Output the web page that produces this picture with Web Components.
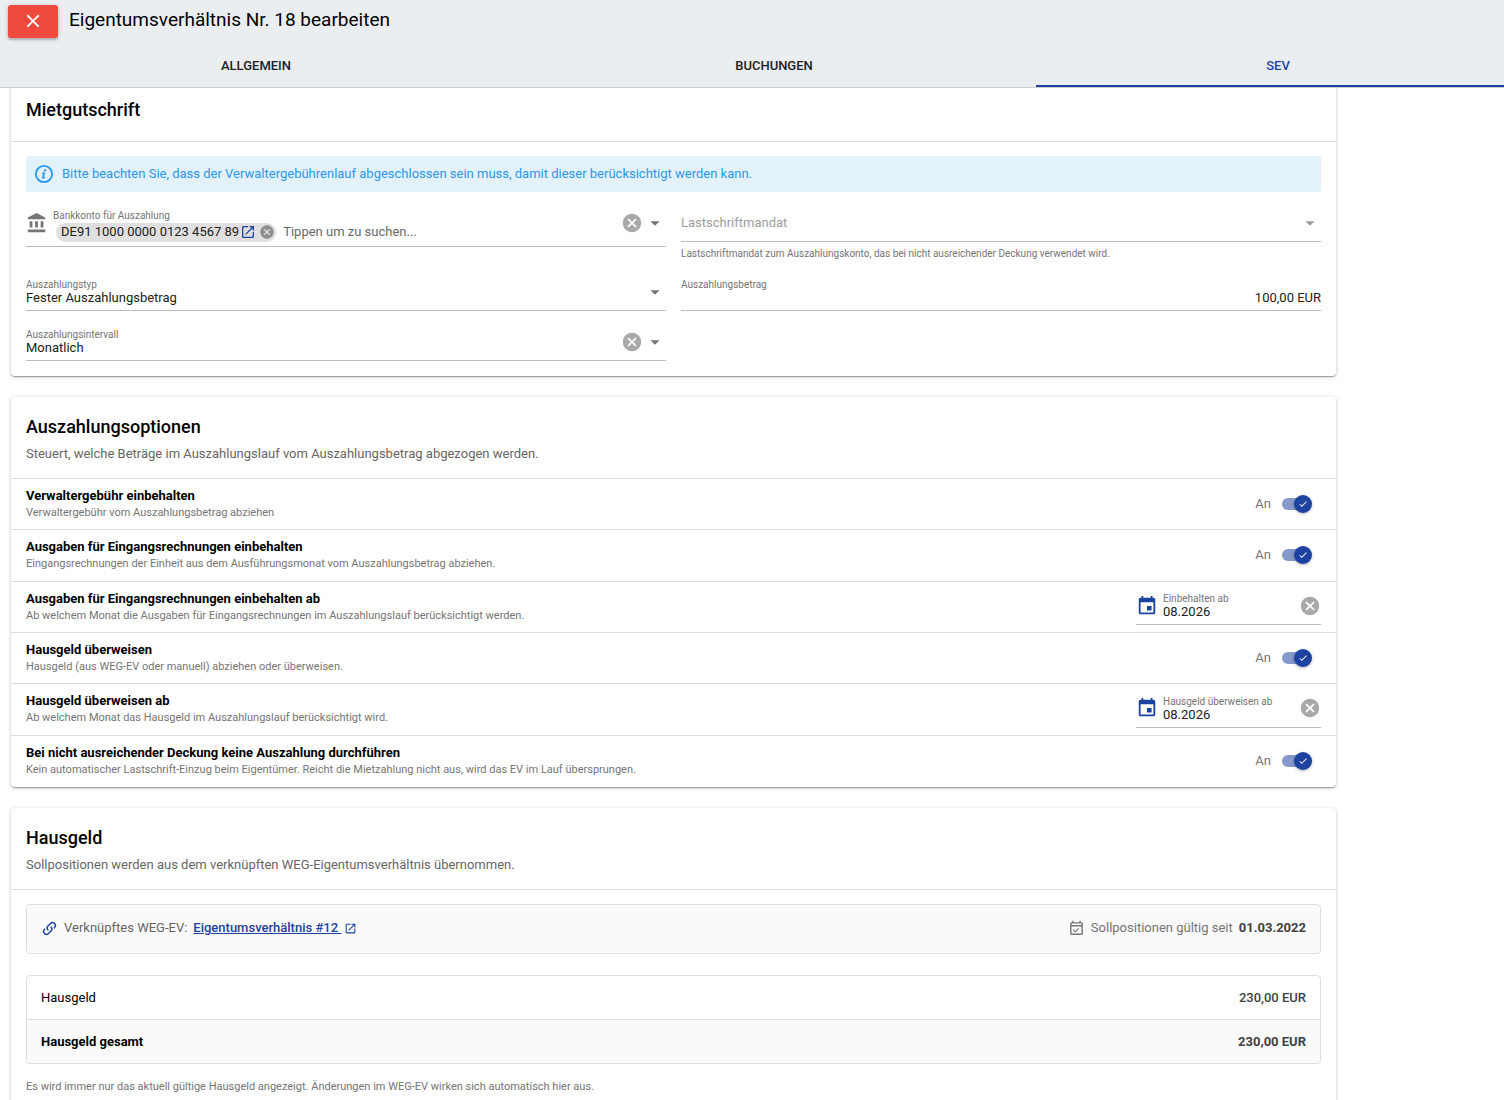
<!DOCTYPE html>
<html lang="de">
<head>
<meta charset="utf-8">
<meta name="viewport" content="width=device-width, initial-scale=1">
<title>Eigentumsverhältnis Nr. 18 bearbeiten</title>
<style>
    :root {
        --primary: #1e429f;
        --negative: #f04a3e;
        --info: #2b97ed;
        --line: #dedede;
        --muted: #757575;
    }

    body {
        margin: 0;
        font-family: Roboto, "Liberation Sans", sans-serif;
        font-size: 13px;
        line-height: 20px;
        color: #000;
        background: #fff;
    }
</style>
</head>
<body>
<app-page></app-page>

<script>
// Shared helper: every element clones its own template into an open root
function attach(host, html) {
    const template = document.createElement('template');
    template.innerHTML = html;
    host.attachShadow({ mode: 'open' });
    host.shadowRoot.appendChild(template.content.cloneNode(true));
    return host.shadowRoot;
}

const ICONS = {
    close: '<path d="M19 6.41L17.59 5 12 10.59 6.41 5 5 6.41 10.59 12 5 17.59 6.41 19 12 13.41 17.59 19 19 17.59 13.41 12z"/>',
    info: '<circle cx="12" cy="12" r="8.9" fill="none" stroke="currentColor" stroke-width="2"/><circle cx="13.1" cy="8" r="1.3"/><path d="M9.9 10.4h3.6l-1.4 5h1.4l-.4 1.4H9.5l1.4-5H9.5z"/>',
    bank: '<path d="M11.5 1L2 6v2h19V6l-9.5-5zM4 10v7h3v-7H4zm6 0v7h3v-7h-3zm6 0v7h3v-7h-3zM2 19v3h19v-3H2z"/>',
    cancel: '<path d="M12 2C6.47 2 2 6.47 2 12s4.47 10 10 10 10-4.47 10-10S17.53 2 12 2zm5 13.59L15.59 17 12 13.41 8.41 17 7 15.59 10.59 12 7 8.41 8.41 7 12 10.59 15.59 7 17 8.41 13.41 12 17 15.59z"/>',
    drop: '<path d="M7 10l5 5 5-5z"/>',
    open: '<path d="M14 3v2h3.59l-9.83 9.83 1.41 1.41L19 6.41V10h2V3h-7zm5 16H5V5h7V3H5a2 2 0 0 0-2 2v14a2 2 0 0 0 2 2h14a2 2 0 0 0 2-2v-7h-2v7z"/>',
    event: '<path d="M17 12h-5v5h5v-5zM16 1v2H8V1H6v2H5c-1.11 0-1.99.9-1.99 2L3 19c0 1.1.89 2 2 2h14c1.1 0 2-.9 2-2V5c0-1.1-.9-2-2-2h-1V1h-2zm3 18H5V8h14v11z"/>',
    check: '<path d="M9 16.17L4.83 12l-1.42 1.41L9 19 21 7l-1.41-1.41z"/>',
    link: '<path d="M10.59 13.41c.41.39.41 1.03 0 1.42-.39.39-1.03.39-1.42 0a5.003 5.003 0 0 1 0-7.07l3.54-3.54a5.003 5.003 0 0 1 7.07 0 5.003 5.003 0 0 1 0 7.07l-1.49 1.49c.01-.82-.12-1.64-.4-2.42l.47-.48a2.982 2.982 0 0 0 0-4.24 2.982 2.982 0 0 0-4.24 0l-3.53 3.53a2.982 2.982 0 0 0 0 4.24zm2.82-4.24c.39-.39 1.03-.39 1.42 0a5.003 5.003 0 0 1 0 7.07l-3.54 3.54a5.003 5.003 0 0 1-7.07 0 5.003 5.003 0 0 1 0-7.07l1.49-1.49c-.01.82.12 1.64.4 2.43l-.47.47a2.982 2.982 0 0 0 0 4.24 2.982 2.982 0 0 0 4.24 0l3.53-3.53a2.982 2.982 0 0 0 0-4.24.973.973 0 0 1 0-1.42z"/>',
    'event-check': '<path d="M19 3h-1V1h-2v2H8V1H6v2H5a2 2 0 0 0-2 2v14a2 2 0 0 0 2 2h14a2 2 0 0 0 2-2V5a2 2 0 0 0-2-2zm0 16H5V9h14v10zm0-12H5V5h14v2zm-8.44 10.56l-3.5-3.5 1.06-1.06 2.44 2.44 4.31-4.31 1.06 1.06z"/>'
};

class UiIcon extends HTMLElement {
    constructor() {
        super();
        attach(this, `
            <style>
                :host { display: inline-flex; flex: none; width: 22px; height: 22px; }
                svg { display: block; width: 100%; height: 100%; fill: currentColor; }
            </style>
            <svg viewBox="0 0 24 24" aria-hidden="true">${ICONS[this.getAttribute('name')] || ''}</svg>
        `);
    }
}

class PageHeader extends HTMLElement {
    constructor() {
        super();
        attach(this, `
            <style>
                :host {
                    display: block;
                    flex: none;
                    overflow: hidden;
                    background: #ebeef1;
                    border-bottom: 1px solid #ccced2;
                }
                .bar { display: flex; align-items: center; gap: 11px; padding: 5px 8px 6px; }
                h1 { margin: 0 0 4px; font-size: 19px; line-height: 28px; font-weight: 400; }
                .close {
                    display: flex;
                    align-items: center;
                    justify-content: center;
                    width: 50px;
                    height: 33px;
                    padding: 0 0 2px;
                    border: 0;
                    border-radius: 3px;
                    color: #fff;
                    background: var(--negative);
                    box-shadow: 0 1px 4px rgba(0, 0, 0, .2), 0 2px 2px rgba(0, 0, 0, .16);
                }
                /* the strip runs on behind the scrollbar gutter */
                .tabs { display: flex; width: calc(100% + 16px); }
                .tab {
                    flex: 512;
                    height: 43px;
                    padding: 2px 0 0;
                    border: 0;
                    border-bottom: 2px solid transparent;
                    background: none;
                    font: 500 13px/20px Roboto, "Liberation Sans", sans-serif;
                    text-transform: uppercase;
                    color: #212121;
                }
                .tab.wide { flex-grow: 524; }
                .tab.last { flex-grow: 484; }
                .tab[aria-selected=true] { color: var(--primary); border-color: var(--primary); }
            </style>
            <div class="bar">
                <button class="close" type="button" aria-label="Schließen"><ui-icon name="close"></ui-icon></button>
                <h1><slot></slot></h1>
            </div>
            <div class="tabs" role="tablist">
                <button class="tab" type="button" role="tab" aria-selected="false">Allgemein</button>
                <button class="tab wide" type="button" role="tab" aria-selected="false">Buchungen</button>
                <button class="tab last" type="button" role="tab" aria-selected="true">SEV</button>
            </div>
        `);
    }
}

class UiCard extends HTMLElement {
    constructor() {
        super();
        const caption = this.getAttribute('caption');
        attach(this, `
            <style>
                :host {
                    display: block;
                    border-radius: 4px;
                    background: #fff;
                    box-shadow: 0 1px 4px rgba(0, 0, 0, .2), 0 1px 1px rgba(0, 0, 0, .2), 0 2px 1px -1px rgba(0, 0, 0, .14);
                }
                header { padding: 15px 15px 16px; border-bottom: 1px solid var(--line); }
                h2 { margin: 0; font-size: 18px; line-height: 30px; font-weight: 500; }
                p { margin: 2px 0 -2px; color: #666; }
            </style>
            <header>
                <h2>${this.getAttribute('heading')}</h2>
                ${caption ? `<p>${caption}</p>` : ''}
            </header>
            <slot></slot>
        `);
    }
}

class InfoBanner extends HTMLElement {
    constructor() {
        super();
        attach(this, `
            <style>
                :host {
                    display: flex;
                    align-items: center;
                    gap: 7px;
                    min-height: 36px;
                    padding: 0 7px;
                    box-sizing: border-box;
                    border-radius: 3px;
                    color: var(--info);
                    background: #e3f1fb;
                }
            </style>
            <ui-icon name="info"></ui-icon>
            <span><slot></slot></span>
        `);
    }
}

// kind: select | search | text | date
class UiField extends HTMLElement {
    constructor() {
        super();
        const label = this.getAttribute('label');
        const value = this.getAttribute('value') || '';
        const kind = this.getAttribute('kind') || 'text';
        const icon = this.getAttribute('icon');
        const hint = this.getAttribute('hint');
        const disabled = this.hasAttribute('disabled') ? 'disabled' : '';
        const dropdown = kind === 'select' || kind === 'search';
        let control = `<input id="control" type="text" value="${value}">`;
        if (kind === 'select') {
            control = `<select id="control" ${disabled}><option>${value}</option></select>`;
        } else if (kind === 'search') {
            control = '<input id="control" type="text" placeholder="Tippen um zu suchen...">';
        }
        let side = '';
        if (this.hasAttribute('clearable')) {
            side += '<button class="clear" type="button" aria-label="Leeren"><ui-icon name="cancel"></ui-icon></button>';
        }
        if (dropdown) {
            side += '<ui-icon name="drop"></ui-icon>';
        }
        attach(this, `
            <style>
                :host { display: block; min-width: 0; }
                .control {
                    display: flex;
                    gap: 5px;
                    min-height: 40px;
                    border-bottom: 1px solid #bdbdbd;
                    color: var(--muted);
                }
                .icon, .side {
                    display: flex;
                    align-items: center;
                    gap: 1px;
                    height: 40px;
                    padding-top: 3px;
                    box-sizing: border-box;
                }
                .main { flex: 1; min-width: 0; padding-top: 9px; box-sizing: border-box; }
                label { display: block; font-size: 10px; line-height: 12px; color: var(--muted); }
                .value { display: flex; align-items: center; min-height: 14px; }
                input, select {
                    appearance: none;
                    flex: 1;
                    width: 100%;
                    min-width: 0;
                    height: 14px;
                    margin: 0;
                    padding: 0;
                    border: 0;
                    outline: 0;
                    background: none;
                    font: 400 13px/14px Roboto, "Liberation Sans", sans-serif;
                    color: #212121;
                    opacity: 1;
                }
                input::placeholder { color: #6a6a6a; opacity: 1; }
                :host([numeric]) input { text-align: right; }
                .clear {
                    display: flex;
                    padding: 0;
                    border: 0;
                    background: none;
                    color: #a9a9a9;
                }
                .hint { padding: 6px 0 1px; font-size: 10px; line-height: 12px; color: var(--muted); }
                :host([kind=search]) .value { min-height: 20px; padding-bottom: 4px; }
                :host([kind=search]) input { margin-left: 7px; }
                :host([kind=date]) .icon { color: var(--primary); }
                :host([disabled]) .main { display: flex; align-items: center; padding-top: 3px; }
                :host([disabled]) label { font-size: 13px; line-height: 20px; }
                :host([disabled]) .value { flex: 1; }
                :host([disabled]) .main, :host([disabled]) .side { opacity: .7; }
            </style>
            <div class="control">
                ${icon ? `<span class="icon"><ui-icon name="${icon}"></ui-icon></span>` : ''}
                <div class="main">
                    <label for="control">${label}</label>
                    <div class="value"><slot></slot>${control}</div>
                </div>
                ${side ? `<div class="side">${side}</div>` : ''}
            </div>
            ${hint ? `<div class="hint">${hint}</div>` : ''}
        `);
    }
}

class AccountChip extends HTMLElement {
    constructor() {
        super();
        attach(this, `
            <style>
                :host {
                    display: inline-flex;
                    align-items: center;
                    flex: none;
                    height: 19px;
                    margin-left: 3px;
                    padding: 0 1px 0 5px;
                    border-radius: 10px;
                    color: #212121;
                    background: #e0e0e0;
                }
                a { display: flex; margin: 0 3px 0 1px; color: var(--primary); }
                button { display: flex; padding: 0; border: 0; background: none; color: #8f8f8f; }
                ui-icon { width: 16px; height: 16px; }
            </style>
            <span><slot></slot></span>
            <a href="#konto" aria-label="Konto öffnen"><ui-icon name="open"></ui-icon></a>
            <button type="button" aria-label="Entfernen"><ui-icon name="cancel"></ui-icon></button>
        `);
    }
}

class UiToggle extends HTMLElement {
    constructor() {
        super();
        attach(this, `
            <style>
                :host { display: block; padding-right: 9px; color: var(--muted); }
                label { display: flex; align-items: center; gap: 11px; }
                .box { display: grid; align-items: center; width: 30px; }
                input, .thumb { grid-area: 1 / 1; }
                input {
                    appearance: none;
                    width: 26px;
                    height: 12px;
                    margin: 0;
                    border-radius: 6px;
                    background: var(--primary);
                    opacity: .54;
                }
                .thumb {
                    display: flex;
                    align-items: center;
                    justify-content: center;
                    justify-self: end;
                    z-index: 1;
                    width: 18px;
                    height: 18px;
                    border-radius: 50%;
                    color: #fff;
                    background: var(--primary);
                    box-shadow: 0 1px 3px rgba(0, 0, 0, .3);
                    pointer-events: none;
                }
                .thumb ui-icon { width: 10px; height: 10px; }
            </style>
            <label>
                <span>An</span>
                <span class="box">
                    <input type="checkbox" role="switch" aria-label="${this.getAttribute('label')}" checked>
                    <span class="thumb"><ui-icon name="check"></ui-icon></span>
                </span>
            </label>
        `);
    }
}

class OptionRow extends HTMLElement {
    constructor() {
        super();
        attach(this, `
            <style>
                :host {
                    display: flex;
                    align-items: center;
                    justify-content: space-between;
                    gap: 15px;
                    padding: 0 15px;
                    border-bottom: 1px solid var(--line);
                }
                :host(:last-child) { border-bottom-color: transparent; }
                h3 { margin: 0; font-size: 13px; line-height: 18px; font-weight: 700; }
                p { margin: 0; font-size: 11px; line-height: 16px; color: var(--muted); }
            </style>
            <div>
                <h3>${this.getAttribute('heading')}</h3>
                <p>${this.getAttribute('text')}</p>
            </div>
            <slot></slot>
        `);
    }
}

class LinkedContract extends HTMLElement {
    constructor() {
        super();
        attach(this, `
            <style>
                :host {
                    display: flex;
                    align-items: center;
                    justify-content: space-between;
                    min-height: 46px;
                    padding: 0 14px 2px;
                    border: 1px solid var(--line);
                    border-radius: 4px;
                    color: #666;
                    background: #fafafa;
                }
                div { display: flex; align-items: center; gap: 6px; }
                ui-icon { width: 17px; height: 17px; }
                .linked { color: var(--primary); }
                a { display: flex; align-items: center; gap: 3px; font-weight: 500; color: var(--primary); white-space: pre; }
                a ui-icon { width: 13px; height: 13px; }
                .since { color: var(--muted); }
                strong { color: #424242; }
            </style>
            <div>
                <ui-icon class="linked" name="link"></ui-icon>
                <span>Verknüpftes WEG-EV:</span>
                <a href="#12"><span>Eigentumsverhältnis #12 </span><ui-icon name="open"></ui-icon></a>
            </div>
            <div class="since">
                <ui-icon name="event-check"></ui-icon>
                <span>Sollpositionen gültig seit</span>
                <strong>01.03.2022</strong>
            </div>
        `);
    }
}

class PositionTable extends HTMLElement {
    constructor() {
        super();
        attach(this, `
            <style>
                :host { display: block; border: 1px solid var(--line); border-radius: 4px; overflow: hidden; }
                table { width: 100%; border-collapse: collapse; }
                th, td { height: 43px; padding: 0 14px; font-size: 13px; }
                th { text-align: left; font-weight: 400; }
                td { text-align: right; font-weight: 500; color: #424242; }
                .total { background: #fafafa; border-top: 1px solid var(--line); }
                .total th, .total td { font-weight: 700; }
            </style>
            <table>
                <tr><th scope="row">Hausgeld</th><td>230,00 EUR</td></tr>
                <tr class="total"><th scope="row">Hausgeld gesamt</th><td>230,00 EUR</td></tr>
            </table>
        `);
    }
}

class AppPage extends HTMLElement {
    constructor() {
        super();
        attach(this, `
            <style>
                :host { display: flex; flex-direction: column; height: 100vh; }
                main { flex: 1; min-height: 0; overflow: auto; scrollbar-width: none; }
                .column {
                    display: flex;
                    flex-direction: column;
                    gap: 21px;
                    max-width: 1325px;
                    margin-top: -8px;
                    padding: 0 11px 21px;
                }
                .fields { display: grid; grid-template-columns: 1fr 1fr; gap: 9px 15px; padding: 14px 15px 15px; }
                info-banner { grid-column: 1 / -1; }
                .options { display: grid; grid-auto-rows: 1fr; min-height: 308px; }
                .options ui-field { width: 185px; margin-bottom: 4px; }
                .dues { display: grid; gap: 21px; padding: 14px 15px; }
                .note { margin: -6px 0 0; font-size: 11px; line-height: 16px; color: var(--muted); }
            </style>
            <page-header>Eigentumsverhältnis Nr. 18 bearbeiten</page-header>
            <main>
                <div class="column">
                    <ui-card heading="Mietgutschrift">
                        <div class="fields">
                            <info-banner>Bitte beachten Sie, dass der Verwaltergebührenlauf abgeschlossen sein muss, damit dieser berücksichtigt werden kann.</info-banner>
                            <ui-field kind="search" icon="bank" label="Bankkonto für Auszahlung" clearable>
                                <account-chip>DE91 1000 0000 0123 4567 89</account-chip>
                            </ui-field>
                            <ui-field kind="select" label="Lastschriftmandat" disabled hint="Lastschriftmandat zum Auszahlungskonto, das bei nicht ausreichender Deckung verwendet wird."></ui-field>
                            <ui-field kind="select" label="Auszahlungstyp" value="Fester Auszahlungsbetrag"></ui-field>
                            <ui-field label="Auszahlungsbetrag" value="100,00 EUR" numeric></ui-field>
                            <ui-field kind="select" label="Auszahlungsintervall" value="Monatlich" clearable></ui-field>
                        </div>
                    </ui-card>
                    <ui-card heading="Auszahlungsoptionen" caption="Steuert, welche Beträge im Auszahlungslauf vom Auszahlungsbetrag abgezogen werden.">
                        <div class="options">
                            <option-row heading="Verwaltergebühr einbehalten" text="Verwaltergebühr vom Auszahlungsbetrag abziehen">
                                <ui-toggle label="Verwaltergebühr einbehalten"></ui-toggle>
                            </option-row>
                            <option-row heading="Ausgaben für Eingangsrechnungen einbehalten" text="Eingangsrechnungen der Einheit aus dem Ausführungsmonat vom Auszahlungsbetrag abziehen.">
                                <ui-toggle label="Ausgaben für Eingangsrechnungen einbehalten"></ui-toggle>
                            </option-row>
                            <option-row heading="Ausgaben für Eingangsrechnungen einbehalten ab" text="Ab welchem Monat die Ausgaben für Eingangsrechnungen im Auszahlungslauf berücksichtigt werden.">
                                <ui-field kind="date" icon="event" label="Einbehalten ab" value="08.2026" clearable></ui-field>
                            </option-row>
                            <option-row heading="Hausgeld überweisen" text="Hausgeld (aus WEG-EV oder manuell) abziehen oder überweisen.">
                                <ui-toggle label="Hausgeld überweisen"></ui-toggle>
                            </option-row>
                            <option-row heading="Hausgeld überweisen ab" text="Ab welchem Monat das Hausgeld im Auszahlungslauf berücksichtigt wird.">
                                <ui-field kind="date" icon="event" label="Hausgeld überweisen ab" value="08.2026" clearable></ui-field>
                            </option-row>
                            <option-row heading="Bei nicht ausreichender Deckung keine Auszahlung durchführen" text="Kein automatischer Lastschrift-Einzug beim Eigentümer. Reicht die Mietzahlung nicht aus, wird das EV im Lauf übersprungen.">
                                <ui-toggle label="Bei nicht ausreichender Deckung keine Auszahlung durchführen"></ui-toggle>
                            </option-row>
                        </div>
                    </ui-card>
                    <ui-card heading="Hausgeld" caption="Sollpositionen werden aus dem verknüpften WEG-Eigentumsverhältnis übernommen.">
                        <div class="dues">
                            <linked-contract></linked-contract>
                            <position-table></position-table>
                            <p class="note">Es wird immer nur das aktuell gültige Hausgeld angezeigt. Änderungen im WEG-EV wirken sich automatisch hier aus.</p>
                        </div>
                    </ui-card>
                </div>
            </main>
        `);
    }
}

customElements.define('ui-icon', UiIcon);
customElements.define('page-header', PageHeader);
customElements.define('ui-card', UiCard);
customElements.define('info-banner', InfoBanner);
customElements.define('ui-field', UiField);
customElements.define('account-chip', AccountChip);
customElements.define('ui-toggle', UiToggle);
customElements.define('option-row', OptionRow);
customElements.define('linked-contract', LinkedContract);
customElements.define('position-table', PositionTable);
customElements.define('app-page', AppPage);
</script>
</body>
</html>
